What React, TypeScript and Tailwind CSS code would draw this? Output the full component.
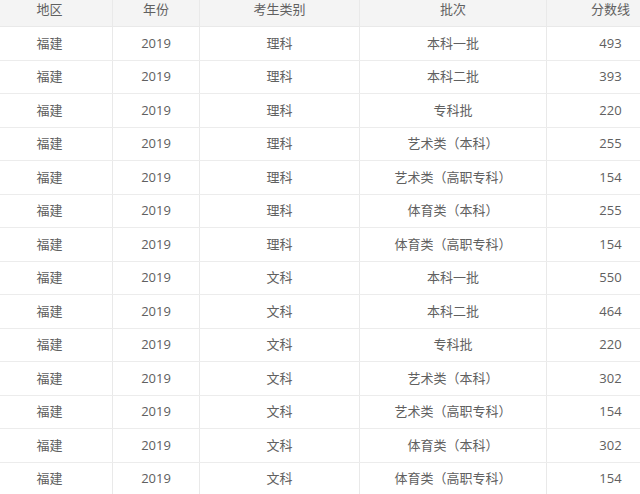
const rows: [string, string, string][] = [
  ["理科", "本科一批", "493"],
  ["理科", "本科二批", "393"],
  ["理科", "专科批", "220"],
  ["理科", "艺术类（本科）", "255"],
  ["理科", "艺术类（高职专科）", "154"],
  ["理科", "体育类（本科）", "255"],
  ["理科", "体育类（高职专科）", "154"],
  ["文科", "本科一批", "550"],
  ["文科", "本科二批", "464"],
  ["文科", "专科批", "220"],
  ["文科", "艺术类（本科）", "302"],
  ["文科", "艺术类（高职专科）", "154"],
  ["文科", "体育类（本科）", "302"],
  ["文科", "体育类（高职专科）", "154"],
];

const cols = "grid grid-cols-[126px_87px_160px_187px_128px]";
const cell = "flex items-center justify-center border-r border-[#e9e9e9]";

export default function App() {
  return (
    <div className="h-[494px] w-[640px] overflow-hidden bg-white text-[13px] text-[#606060] [font-family:'Open_Sans','Noto_Sans_CJK_SC',sans-serif]">
      <div className="-ml-[13px] w-[688px]">
        <div className={`${cols} h-[27px] bg-[#f4f4f4] border-b border-[#e9e9e9]`}>
          <div className={`${cell} pb-[6px]`}>地区</div>
          <div className={`${cell} pb-[6px]`}>年份</div>
          <div className={`${cell} pb-[6px]`}>考生类别</div>
          <div className={`${cell} pb-[6px]`}>批次</div>
          <div className={`${cell} pb-[6px]`}>分数线</div>
        </div>
        {rows.map(([kind, batch, score], i) => (
          <div key={i} className={`${cols} h-[33.5px] border-b border-[#ececec]`}>
            <div className={cell}>福建</div>
            <div className={cell}>2019</div>
            <div className={cell}>{kind}</div>
            <div className={cell}>{batch}</div>
            <div className={cell}>{score}</div>
          </div>
        ))}
      </div>
    </div>
  );
}
